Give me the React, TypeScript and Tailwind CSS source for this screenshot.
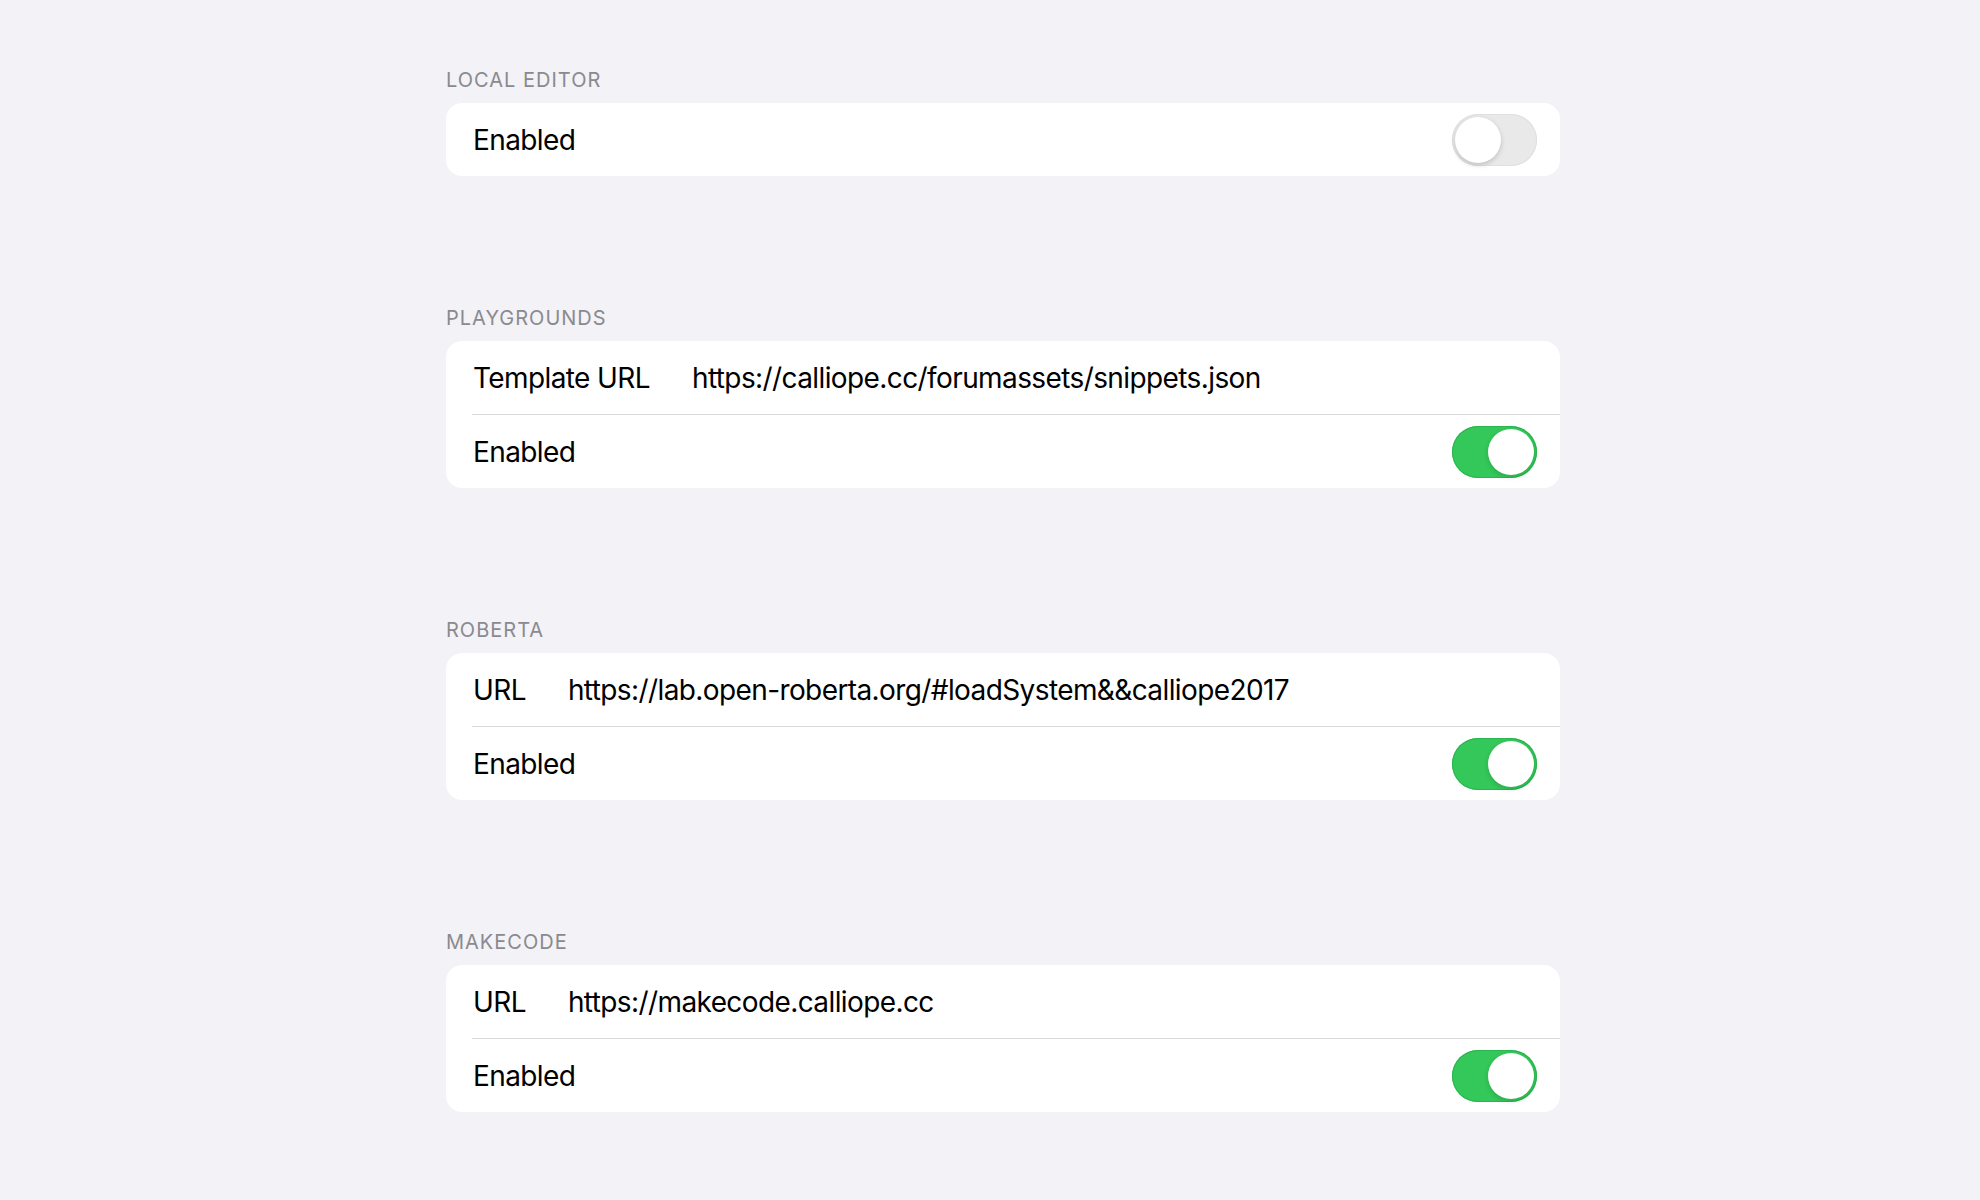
const font = { fontFamily: "Inter, 'Noto Sans', sans-serif" };

type Row = { label: string; value?: string; toggle?: boolean };

const Toggle = ({ on }: { on: boolean }) => (
  <div
    className={
      on
        ? "relative w-[85px] h-[52px] rounded-full bg-[#34c759] shadow-[inset_0_0_0_1px_#2bb54f]"
        : "relative w-[85px] h-[52px] rounded-full bg-[#e9e9ea] shadow-[inset_0_0_0_1px_#e0e0e0]"
    }
  >
    <div
      className={
        on
          ? "absolute top-[3px] right-[3px] w-[46px] h-[46px] rounded-full bg-white shadow-[0_2px_5px_rgba(0,0,0,0.15)]"
          : "absolute top-[3px] left-[3px] w-[46px] h-[46px] rounded-full bg-white shadow-[0_2px_5px_rgba(0,0,0,0.18)]"
      }
    />
  </div>
);

const SettingsRow = ({ row }: { row: Row }) => (
  <div className="h-[73px] flex items-center pl-[27px] pr-[23px] text-[28px] tracking-[-0.6px] text-black">
    <span>{row.label}</span>
    {row.value && <span className="ml-[42px]">{row.value}</span>}
    {row.toggle !== undefined && (
      <div className="ml-auto">
        <Toggle on={row.toggle} />
      </div>
    )}
  </div>
);

const Section = ({ title, rows }: { title: string; rows: Row[] }) => (
  <div>
    <div className="h-6 leading-6 text-[20px] tracking-[1px] text-[#8a8a8e] uppercase mb-[11px]">{title}</div>
    <div className="bg-white rounded-[16px] overflow-hidden">
      {rows.map((r, i) => (
        <div key={i}>
          {i > 0 && <div className="ml-[26px] h-px bg-[#d9d9dc]" />}
          <SettingsRow row={r} />
        </div>
      ))}
    </div>
  </div>
);

export default function App() {
  return (
    <div className="min-h-[1200px] bg-[#f2f2f7] pt-[68px]" style={font}>
      <div className="ml-[446px] w-[1114px] flex flex-col gap-[130px]">
        <Section title="Local Editor" rows={[{ label: "Enabled", toggle: false }]} />
        <Section
          title="Playgrounds"
          rows={[
            { label: "Template URL", value: "https://calliope.cc/forumassets/snippets.json" },
            { label: "Enabled", toggle: true },
          ]}
        />
        <Section
          title="Roberta"
          rows={[
            { label: "URL", value: "https://lab.open-roberta.org/#loadSystem&&calliope2017" },
            { label: "Enabled", toggle: true },
          ]}
        />
        <Section
          title="Makecode"
          rows={[
            { label: "URL", value: "https://makecode.calliope.cc" },
            { label: "Enabled", toggle: true },
          ]}
        />
      </div>
    </div>
  );
}
